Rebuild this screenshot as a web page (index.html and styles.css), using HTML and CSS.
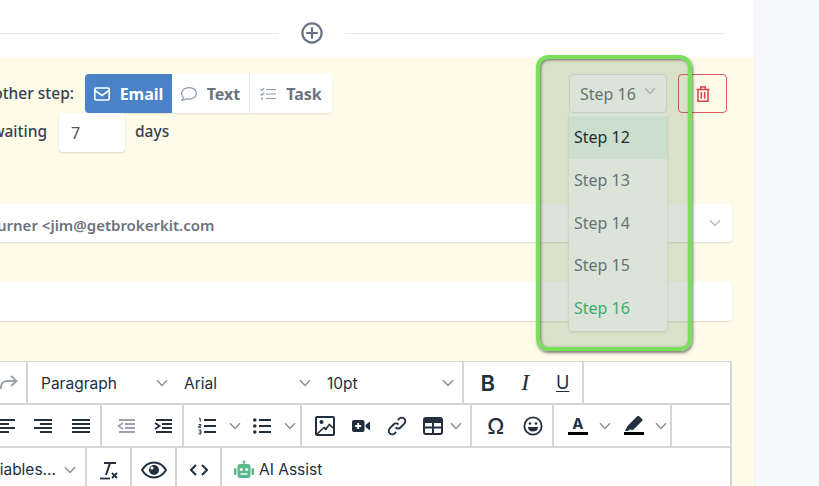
FILE: index.html
```html
<!DOCTYPE html>
<html lang="en">
<head>
<meta charset="utf-8">
<title>Step editor</title>
<link rel="stylesheet" href="styles.css">
</head>
<body>
<svg class="defs" width="0" height="0" aria-hidden="true">
  <symbol id="chev" viewBox="0 0 12 8"><path d="M1 1.200 6 6.400l5-5.200" fill="none" stroke="currentColor" stroke-width="1.500"/></symbol>
</svg>
<main class="main">
  <div class="divider">
    <span class="rule rule-left"></span>
    <svg class="plus" viewBox="0 0 22 22"><circle cx="11" cy="11" r="9.600" fill="none" stroke="#6b7280" stroke-width="2.200"/><path d="M11 6v10M6 11h10" stroke="#6b7280" stroke-width="2.200" stroke-linecap="round"/></svg>
    <span class="rule rule-right"></span>
  </div>
  <section class="panel">
    <div class="top">
      <div class="top-left">
        <div class="type-row">
          <span class="label label-type">Send another step:</span>
          <div class="btn-group">
            <button class="tab tab-email"><svg class="tab-icon" viewBox="0 0 16 14"><rect x=".8" y="1" width="14.400" height="12" rx="1.500" fill="none" stroke="currentColor" stroke-width="1.600"/><path d="M1 3.500 8 8.500l7-5" fill="none" stroke="currentColor" stroke-width="1.600"/></svg>Email</button>
            <button class="tab tab-text"><svg class="tab-icon muted" viewBox="0 0 16 14"><path d="M8 .6c4.100 0 7.400 2.500 7.400 5.800S12.100 12.200 8 12.200c-1 0-2-.2-2.800-.4C4.200 12.600 2.600 13.400.8 13.400c.8-.9 1.500-2 1.600-3C1.200 9.400.6 8 .6 6.400.6 3.100 3.900.6 8 .6Z" fill="none" stroke="currentColor" stroke-width="1.200"/></svg>Text</button>
            <button class="tab tab-task"><svg class="tab-icon muted" viewBox="0 0 16 14"><path d="M6 2.500h10M6 7h10M6 11.500h10" stroke="currentColor" stroke-width="1.200"/><path d="m.5 2.400 1.300 1.300L4.200 1M.5 6.900l1.300 1.300 2.400-2.700" fill="none" stroke="currentColor" stroke-width="1.200"/><circle cx="2" cy="11.500" r="1.100" fill="currentColor"/></svg>Task</button>
          </div>
        </div>
        <div class="wait-row">
          <span class="label label-wait">after waiting</span>
          <div class="number">7</div>
          <span class="label">days</span>
        </div>
      </div>
      <div class="top-right">
        <div class="step-select">
          <div class="step-current">Step 16<svg class="step-chev"><use href="#chev"/></svg></div>
          <ul class="step-menu">
            <li class="step step-hover">Step 12</li>
            <li class="step">Step 13</li>
            <li class="step">Step 14</li>
            <li class="step">Step 15</li>
            <li class="step step-active">Step 16</li>
          </ul>
        </div>
        <button class="trash"><svg viewBox="0 0 14 16" width="14" height="16"><path d="M.5 3.500h13M4.700 3.300V1h4.600v2.300M2 3.500v11.800h10V3.500M5.300 6v6.800M8.700 6v6.800" fill="none" stroke="currentColor" stroke-width="1.500"/></svg></button>
      </div>
    </div>
    <div class="field field-from"><span class="from-text">Jim Turner &lt;jim@getbrokerkit.com</span><svg class="field-chev"><use href="#chev"/></svg></div>
    <div class="field field-subject"></div>
    <div class="editor">
      <div class="tb-row">
        <div class="grp g-undo"><svg class="ico redo" viewBox="0 0 18 18"><path d="M1 15c-.500-5 2-8 6-8h9M11 2l5.500 5-5.500 5" fill="none" stroke="#9ca3af" stroke-width="2"/></svg></div>
        <div class="grp g-fonts">
          <div class="sel">Paragraph<svg class="chev"><use href="#chev"/></svg></div>
          <div class="sel">Arial<svg class="chev"><use href="#chev"/></svg></div>
          <div class="sel">10pt<svg class="chev"><use href="#chev"/></svg></div>
        </div>
        <div class="grp g-style">
          <div class="btn b-bold">B</div>
          <div class="btn b-ital">I</div>
          <div class="btn b-under">U</div>
        </div>
      </div>
      <div class="tb-row">
        <div class="grp g-align">
          <div class="btn"><svg class="ico" viewBox="0 0 18 18"><path d="M0 3h18M0 7h12M0 11h18M0 15h12" stroke="#222f3e" stroke-width="2"/></svg></div>
          <div class="btn"><svg class="ico" viewBox="0 0 18 18"><path d="M0 3h18M6 7h12M0 11h18M6 15h12" stroke="#222f3e" stroke-width="2"/></svg></div>
          <div class="btn"><svg class="ico" viewBox="0 0 18 18"><path d="M0 3h18M0 7h18M0 11h18M0 15h18" stroke="#222f3e" stroke-width="2"/></svg></div>
        </div>
        <div class="grp g-indent">
          <div class="btn"><svg class="ico" viewBox="0 0 18 18"><path d="M2 3h16M8 7h10M8 11h10M2 15h16" stroke="#9ca3af" stroke-width="1.800"/><path d="M6 6 1.500 9 6 12" fill="none" stroke="#9ca3af" stroke-width="1.800"/></svg></div>
          <div class="btn"><svg class="ico" viewBox="0 0 18 18"><path d="M2 3h16M8 7h10M8 11h10M2 15h16" stroke="#222f3e" stroke-width="1.800"/><path d="m1 6 4.500 3L1 12" fill="none" stroke="#222f3e" stroke-width="1.800"/></svg></div>
        </div>
        <div class="grp g-lists">
          <div class="btn"><svg class="ico" viewBox="0 0 18 18"><path d="M6 3h12M6 9h12M6 15h12" stroke="#222f3e" stroke-width="2"/><path d="M1 1.200h1.200v3.600M.6 7.500h2.200v1.500H.8v1.500h2.200M.6 13h2.300v4H.6M1.200 15h1.700" fill="none" stroke="#222f3e"/></svg></div>
          <svg class="chev chev-split"><use href="#chev"/></svg>
          <div class="btn"><svg class="ico" viewBox="0 0 18 18"><path d="M6 3h12M6 9h12M6 15h12" stroke="#222f3e" stroke-width="2"/><circle cx="1.800" cy="3" r="1.800" fill="#222f3e"/><circle cx="1.800" cy="9" r="1.800" fill="#222f3e"/><circle cx="1.800" cy="15" r="1.800" fill="#222f3e"/></svg></div>
          <svg class="chev chev-split"><use href="#chev"/></svg>
        </div>
        <div class="grp g-insert">
          <div class="btn"><svg class="ico-lg" viewBox="0 0 20 20"><rect x="1" y="1" width="18" height="18" rx="1" fill="none" stroke="#222f3e" stroke-width="2"/><circle cx="6.500" cy="6" r="2" fill="#222f3e"/><path d="m10 14 4.500-5.500L18 12" fill="none" stroke="#222f3e" stroke-width="1.600"/><path d="M2 18 9 11.500l3 2" fill="none" stroke="#222f3e" stroke-width="1.600"/></svg></div>
          <div class="btn"><svg class="ico-lg" viewBox="0 0 20 20"><rect x="1" y="4" width="12.500" height="12" rx="2" fill="#222f3e"/><path d="m14.500 9 4.500-3.500v9L14.500 11Z" fill="#222f3e"/><path d="M7.200 7v6M4.200 10h6" stroke="#fff" stroke-width="1.800"/></svg></div>
          <div class="btn"><svg class="ico-lg" viewBox="0 0 20 20"><path d="M8.500 11.500a3.500 3.500 0 0 0 5 0l3.800-3.800a3.500 3.500 0 0 0-5-5l-1.500 1.500M11.500 8.500a3.500 3.500 0 0 0-5 0l-3.800 3.800a3.500 3.500 0 0 0 5 5l1.500-1.500" fill="none" stroke="#222f3e" stroke-width="1.800"/></svg></div>
          <div class="btn"><svg class="ico-lg" viewBox="0 0 20 18"><rect x="1" y="1" width="18" height="16" rx="2" fill="none" stroke="#222f3e" stroke-width="2"/><path d="M1 6h18V1.200H1Z" fill="#222f3e"/><path d="M1 10.500h18M10 6v11" stroke="#222f3e" stroke-width="2"/></svg></div>
          <svg class="chev chev-table"><use href="#chev"/></svg>
        </div>
        <div class="grp g-char">
          <div class="btn"><span class="omega">Ω</span></div>
          <div class="btn"><svg class="ico-lg" viewBox="0 0 20 20"><circle cx="10" cy="10" r="8.600" fill="none" stroke="#222f3e" stroke-width="1.800"/><circle cx="7" cy="7.500" r="1.300" fill="#222f3e"/><circle cx="13" cy="7.500" r="1.300" fill="#222f3e"/><path d="M5 11h10c0 3-2.200 4.500-5 4.500S5 14 5 11Z" fill="#222f3e"/></svg></div>
        </div>
        <div class="grp g-color">
          <div class="btn color-btn"><span class="letter-a">A</span><span class="swatch"></span></div>
          <svg class="chev chev-color"><use href="#chev"/></svg>
          <div class="btn color-btn"><svg class="marker" viewBox="0 0 20 15"><path d="M1 15 3.500 10 11 2.500 13 .5c.800-.6 1.700-.6 2.400 0l2.500 2.300c.7.700.7 1.700 0 2.400L16 7 9 14l-3.500-.5L4 15Z" fill="#222f3e"/></svg><span class="swatch"></span></div>
          <svg class="chev chev-color"><use href="#chev"/></svg>
        </div>
      </div>
      <div class="tb-row">
        <div class="grp g-vars"><span>Variables...</span><svg class="chev"><use href="#chev"/></svg></div>
        <div class="grp g-one"><svg class="ico-lg" viewBox="0 0 20 20"><path d="M5 3h12M11 3 7 15" fill="none" stroke="#222f3e" stroke-width="2"/><path d="M1 18.500h10" stroke="#222f3e" stroke-width="1.800"/><path d="m13 13 5 5M18 13l-5 5" stroke="#222f3e" stroke-width="1.800"/></svg></div>
        <div class="grp g-one"><svg class="eye" viewBox="0 0 26 18"><path d="M1 9c3-5 7-7.500 12-7.500S22 4 25 9c-3 5-7 7.500-12 7.500S4 14 1 9Z" fill="none" stroke="#222f3e" stroke-width="2"/><circle cx="13" cy="9" r="5" fill="#222f3e"/><circle cx="11" cy="7" r="1.500" fill="#fff"/></svg></div>
        <div class="grp g-one"><svg class="ico" viewBox="0 0 18 18"><path d="M6 4 1 9l5 5M12 4l5 5-5 5" fill="none" stroke="#222f3e" stroke-width="2"/></svg></div>
        <div class="grp g-ai"><svg class="ico-lg" viewBox="0 0 20 20"><path d="M10 1v3" stroke="#5ab88a" stroke-width="1.500"/><circle cx="10" cy="1.800" r="1.400" fill="#5ab88a"/><rect x="3.500" y="4" width="13" height="14" rx="2.500" fill="#5ab88a"/><rect x="0" y="8" width="2.500" height="7" rx="1" fill="#5ab88a"/><rect x="17.500" y="8" width="2.500" height="7" rx="1" fill="#5ab88a"/><circle cx="7.300" cy="9.500" r="1.500" fill="#fff"/><circle cx="12.700" cy="9.500" r="1.500" fill="#fff"/><path d="M6.500 14h7" stroke="#fff" stroke-width="1.400"/></svg><span>AI Assist</span></div>
      </div>
    </div>
  </section>
  <div class="highlight"></div>
</main>
<aside class="side"></aside>
</body>
</html>
```

FILE: styles.css
```css
* { box-sizing: border-box; }
html, body { margin: 0; height: 100%; overflow: hidden; }
body { display: flex; font-family: "Noto Sans", "Lato", sans-serif; color: #374151; background: #f7f8f9; }
.defs { position: absolute; }
.main { position: relative; width: 754px; height: 486px; background: #fff; overflow: hidden; flex: none; }
.side { flex: 1; background: #f7f8f9; border-left: 1px solid #f0f1f4; }

.divider { height: 57px; padding: 22px 0 13px; display: flex; align-items: center; }
.rule { height: 1px; background: #e5e7eb; }
.rule-left { width: 278px; }
.rule-right { width: 380px; }
.plus { width: 22px; height: 22px; margin: 0 22px 0 23px; }

.panel { background: #fefbe9; height: 429px; padding: 17px 22px 0 0; }
.top { display: flex; justify-content: space-between; height: 130px; padding-right: 5px; }
.top-left { margin-left: -60px; }
.type-row { display: flex; align-items: center; height: 39px; }
.label { font-size: 15.500px; font-weight: 500; line-height: 20px; color: #374151; }
.label-type { width: 145px; flex: none; display: flex; justify-content: flex-end; white-space: nowrap; margin-top: -2px; padding-right: 11px; }
.btn-group { display: flex; border-radius: 4px; box-shadow: 0 1px 2px rgba(0,0,0,.1); background: #fff; }
.tab { display: flex; align-items: center; height: 39px; border: 0; background: #fff; font: 700 16px "Noto Sans", sans-serif; color: #6b7280; padding: 0; justify-content: center; border-right: 1px solid #e5e7eb; }
.tab-email { width: 87px; background: #4a82c7; color: #fff; border-radius: 4px 0 0 4px; border-right: 0; }
.tab-text { width: 78px; }
.tab-task { width: 82px; border-right: 0; border-radius: 0 4px 4px 0; }
.tab-icon { width: 16px; height: 14px; margin-right: 10px; flex: none; }
.muted { color: #8f9bb3; }
.wait-row { display: flex; align-items: center; height: 39px; }
.label-wait { width: 107px; text-align: right; white-space: nowrap; margin-right: 12px; margin-top: -3px; }
.wait-row .label:last-child { margin-left: 10px; margin-top: -3px; }
.number { width: 66px; height: 39px; background: #fff; border-radius: 4px; box-shadow: 0 1px 2px rgba(0,0,0,.15); font-size: 16px; line-height: 40px; padding-left: 12px; color: #4b5563; }

.top-right { display: flex; gap: 11px; align-items: flex-start; }
.step-select { position: relative; width: 98px; }
.step-current { height: 39px; padding-left: 10px; display: flex; align-items: center; font-size: 16px; color: #6b7280; background: #fff; border: 1px solid #e5e7eb; border-radius: 4px; }
.step-chev { width: 12px; height: 8px; color: #c0c4ca; margin-left: 8px; margin-top: -6px; }
.step-menu { position: absolute; z-index: 2; top: 40px; left: 0; width: 98px; margin: 0; padding: 2px 0 0; list-style: none; background: #fff; border-radius: 0 0 4px 4px; box-shadow: 0 1px 3px rgba(0,0,0,.15); }
.step { height: 42.800px; line-height: 42px; padding-left: 5px; font-size: 16px; color: #6b7280; }
.step-hover { background: #ebf8f0; color: #111827; }
.step-active { color: #3cb878; height: 44px; }
.trash { width: 49px; height: 39px; padding: 0; background: transparent; border: 1px solid #e05b62; border-radius: 4px; color: #d9434b; display: flex; align-items: center; justify-content: center; }

.field { height: 38px; background: #fff; border-radius: 4px; box-shadow: 0 1px 2px rgba(0,0,0,.12); margin-left: -60px; display: flex; align-items: center; position: relative; font-size: 15px; font-weight: 600; color: #6b7280; white-space: nowrap; }
.from-text { margin-left: 22px; padding-top: 4px; }
.field-from { margin-bottom: 40px; }
.field-subject { height: 39px; margin-bottom: 40px; }
.field-chev { position: absolute; right: 11px; top: 15px; width: 12px; height: 8px; color: #b9bdc4; }

.editor { margin-left: -20px; width: 752px; border: 2px solid #d5d5d5; border-width: 1px 2px 0 0; background: #fff; height: 130px; font-family: "Inter", sans-serif; color: #222f3e; }
.tb-row { display: flex; height: 43px; border-bottom: 2px solid #d5d5d5; }
.tb-row:last-child { border-bottom: 0; }
.grp { display: flex; align-items: center; height: 100%; border-right: 2px solid #d5d5d5; flex: none; }
.g-undo { width: 48px; padding-left: 20px; }
.g-fonts { width: 436px; padding-left: 13px; gap: 16px; padding-top: 1px; }
.sel { width: 127px; flex: none; display: flex; justify-content: space-between; align-items: center; font-size: 15.500px; }
.chev { width: 12px; height: 8px; color: #8a8f98; flex: none; }
.g-style { width: 120px; padding-left: 5px; }
.btn { width: 37.500px; display: flex; justify-content: center; align-items: center; flex: none; }
.b-bold { font-size: 22px; font-weight: 600; }
.b-ital { font-family: "Liberation Serif", serif; font-style: italic; font-size: 24px; }
.b-under { font-size: 18px; text-decoration: underline; text-underline-offset: 2px; }
.ico { width: 18px; height: 18px; }
.ico-lg { width: 20px; height: 20px; }
.g-align { width: 122px; padding-left: 7px; }
.g-indent { width: 82px; padding-left: 5px; }
.g-lists { width: 118px; padding-left: 4px; }
.chev-split { margin-left: 3px; }
.chev-split + .btn { margin-left: 3px; }
.g-insert { width: 170px; padding-left: 5px; }
.g-insert .btn { width: 36px; }
.chev-table { margin-left: -1px; }
.g-char { width: 82px; padding-left: 5px; }
.omega { font-size: 22px; font-weight: 500; }
.g-color { width: 118px; padding-left: 5px; }
.color-btn { flex-direction: column; }
.letter-a { font-size: 15px; font-weight: 700; line-height: 14px; }
.swatch { display: block; width: 20px; height: 3px; background: #000; margin-top: 1px; }
.marker { width: 20px; height: 15px; display: block; }
.chev-color { margin: 0 5px 0 2px; }

.g-vars { width: 107px; justify-content: flex-end; padding-right: 9px; gap: 8px; font-size: 15.500px; white-space: nowrap; }
.g-one { width: 45px; justify-content: center; }
.eye { width: 26px; height: 18px; }
.g-ai { border-right: 0; padding-left: 12px; gap: 5px; font-size: 15.500px; }

.highlight { position: absolute; left: 536px; top: 55px; width: 156px; height: 296px; z-index: 5; border: 4px solid #79e05c; border-radius: 12px; background: rgba(80,120,70,.2); box-shadow: 1px 2px 3px rgba(0,0,0,.5), inset 1px 1px 3px rgba(0,0,0,.5); }
```
